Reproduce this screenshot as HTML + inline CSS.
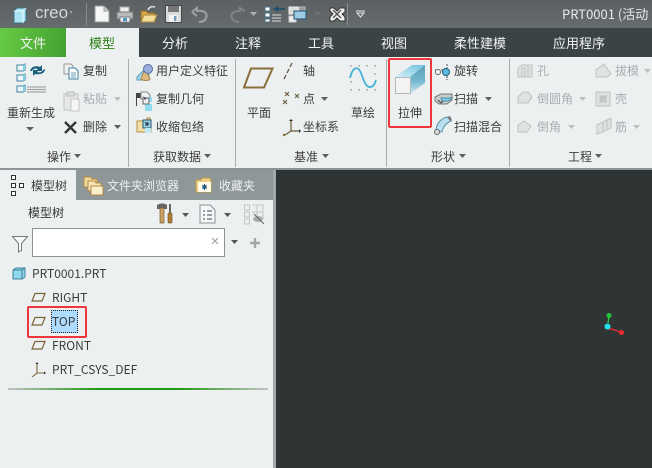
<!DOCTYPE html>
<html><head><meta charset="utf-8"><style>
html,body{margin:0;padding:0}
body{width:652px;height:468px;overflow:hidden;position:relative;background:#edf0f1;font-family:"Liberation Sans","Noto Sans CJK SC",sans-serif}
.b{position:absolute}
.t{position:absolute;line-height:16px;white-space:nowrap;font-size:12px;color:#3c3c3c;font-family:"Noto Sans CJK SC","Liberation Sans",sans-serif}
.g{color:#a9adae}
.w{color:#f2f4f4;font-size:13px}
svg{position:absolute;left:0;top:0}
</style></head><body>
<div class="b" style="left:0;top:0;width:652px;height:28px;background:linear-gradient(#5b6162,#666c6d)"></div>
<div class="b" style="left:0;top:28px;width:652px;height:29px;background:#3b4346"></div>
<div class="b" style="left:0;top:28px;width:66px;height:29px;background:linear-gradient(100deg,#66cc44,#44a030)"></div>
<div class="b" style="left:66px;top:28px;width:73px;height:29px;background:#edf0f1"></div>
<div class="b" style="left:0;top:168px;width:652px;height:2px;background:#8d9495"></div>
<div class="b" style="left:128px;top:59px;width:1px;height:108px;background:#a8adae"></div>
<div class="b" style="left:235px;top:59px;width:1px;height:108px;background:#a8adae"></div>
<div class="b" style="left:386px;top:59px;width:1px;height:108px;background:#a8adae"></div>
<div class="b" style="left:509px;top:59px;width:1px;height:108px;background:#a8adae"></div>
<!-- left panel -->
<div class="b" style="left:76px;top:170px;width:197px;height:30px;background:#8f9899"></div>
<div class="b" style="left:273px;top:170px;width:3px;height:298px;background:#a3a9aa"></div>
<div class="b" style="left:276px;top:170px;width:376px;height:298px;background:#2f3535"></div>
<div class="b" style="left:32px;top:228px;width:191px;height:27px;background:#fff;border:1px solid #8a9292"></div>
<div class="b" style="left:51px;top:310px;width:27px;height:23px;background:#aedcff;border:1px dotted #222;box-sizing:border-box"></div>
<div class="b" style="left:8px;top:388px;width:260px;height:2px;background:linear-gradient(90deg,#c0c4c2,#1f9a10 35%,#1f9a10 65%,#c0c4c2)"></div>
<div class="b" style="left:388px;top:58px;width:44px;height:70px;box-sizing:border-box;border:2px solid #f0363a;border-radius:2px"></div>
<div class="b" style="left:27px;top:306px;width:60px;height:32px;box-sizing:border-box;border:2px solid #f0363a;border-radius:2px"></div>

<svg width="652" height="468" viewBox="0 0 652 468" fill="none">
<defs>
<linearGradient id="top1" x1="0" y1="1" x2="1" y2="0"><stop offset="0" stop-color="#d4f0f7"/><stop offset="1" stop-color="#6fc3dd"/></linearGradient>
<linearGradient id="side1" x1="0" y1="0" x2="0" y2="1"><stop offset="0" stop-color="#5a9fb8"/><stop offset=".55" stop-color="#74b8d0"/><stop offset="1" stop-color="#cdeef6"/></linearGradient>
</defs>
<!-- creo cube -->
<path d="M14 11l3-3h9v13l-3 2H14z" fill="#a8e4f4" stroke="#3f6f80"/><path d="M14 11h9v12M23 11l3-3" stroke="#e8fafd"/>
<line x1="86.500" y1="3" x2="86.500" y2="26" stroke="#878c8d"/>
<line x1="347.500" y1="3" x2="347.500" y2="26" stroke="#878c8d"/>
<!-- QAT -->
<path d="M95 6h9l5 5v11H95z" fill="#f5f6f6" stroke="#999"/><path d="M104 6v5h5" fill="#ccc" stroke="#999"/>
<path d="M120 7h9v5h-9z" fill="#eee" stroke="#aaa"/><rect x="117" y="12" width="16" height="7" rx="1" fill="#bbb" stroke="#777"/><rect x="120" y="17" width="10" height="5" fill="#f2f2f2" stroke="#778"/><rect x="123" y="18" width="4" height="3" fill="#4a90b8"/>
<path d="M141 11h5l2 2h7v9h-14z" fill="#d9a545" stroke="#8a6a30"/><path d="M141 22l3-7h13l-3 7z" fill="#f4dc9a" stroke="#a78a48"/><path d="M148 10c1-3 4-4 7-3" stroke="#ddd" stroke-width="1.500"/>
<rect x="165.500" y="5.500" width="16" height="17" fill="#d8dcdc" stroke="#444"/><rect x="168" y="6" width="11" height="6" fill="#777"/><rect x="169" y="15" width="9" height="7" fill="#f4f4f4"/><rect x="174" y="16" width="2.500" height="5" fill="#6a9dbb"/>
<path d="M192 12l5-4v3c7-1 11 2 9 7-1 3-4 4-7 4" stroke="#9ea2a3" stroke-width="2"/><path d="M192 12l5 4" stroke="#9ea2a3" stroke-width="2"/>
<path d="M212 14l3 1-3 0z" fill="#6f7576"/>
<path d="M245 11l-5-3v3c-7 0-10 3-8 7 1 3 4 4 7 4" stroke="#7f8485" stroke-width="2"/>
<path d="M250 12h7l-3.500 4z" fill="#aab0b0"/>
<rect x="265" y="7" width="5" height="4" fill="#fff" stroke="#4a6f86"/><rect x="265" y="13" width="5" height="4" fill="#fff" stroke="#4a6f86"/><rect x="265" y="19" width="5" height="3" fill="#fff" stroke="#4a6f86"/>
<path d="M272 15h9M272 18h9M272 21h9" stroke="#ddd"/><path d="M273 9h6M276 7l3 2-3 2M285 9h-5" stroke="#1a4d6b" stroke-width="1.500"/>
<rect x="289" y="7" width="9" height="7" fill="#ddd" stroke="#eee"/><rect x="289" y="16" width="7" height="6" fill="#eee" stroke="#ccc"/><rect x="299" y="7" width="6" height="5" fill="#999" stroke="#bbb"/><rect x="294" y="11" width="12" height="8" fill="#9ccbe6" stroke="#1f4f70"/>
<path d="M314 12h7l-3.500 4z" fill="#6f7576"/>
<path d="M330 8h4l3 3 3-3h5v4l-3 2 3 3v4h-5l-3-3-3 3h-4v-4l3-3-3-3z" fill="#f5f5f5" stroke="#333"/><path d="M333 10l8 8M341 10l-8 8" stroke="#555" stroke-width="1.500"/>
<path d="M356 11h9M357 13l3.500 4 3.500-4z" stroke="#e4e6e6" fill="none"/>
<!-- regen -->
<g fill="#eaf8fb" stroke="#3f7f99"><path d="M17 65h6l2-1v6l-2 1h-6z"/><path d="M17 75h6l2-1v6l-2 1h-6z"/><path d="M17 86h6l2-1v6l-2 1h-6z"/></g>
<g fill="#7fd0ea"><path d="M23 65l2-1v6l-2 1z"/><path d="M23 75l2-1v6l-2 1z"/><path d="M23 86l2-1v6l-2 1z"/></g>
<path d="M27 87h19M27 89.500h19M27 92h19" stroke="#a4a8a9" stroke-width="1.200"/>
<path d="M30 71c1-4 5-6 10-4l2-2v6h-6l2-2c-3-1-5 0-6 2z M45 69c0 4-4 6-10 5l-2 2v-6h6l-2 2c3 1 5 0 6-2z" fill="#1b5f7f"/>
<!-- copy -->
<path d="M64 64h7l2 2v8h-9z" fill="#eee" stroke="#999"/><path d="M69 68h6l3 3v8H69z" fill="#fff" stroke="#3d7f9f"/><path d="M71 73h5M71 75h5M71 77h5" stroke="#3d7f9f" stroke-width=".7"/>
<path d="M64 94h14v16H64z" fill="#e6e8e8" stroke="#c0c2c2"/><rect x="67" y="92" width="7" height="4" fill="#ddd" stroke="#bbb"/><path d="M71 99h8v12h-8z" fill="#f6f6f6" stroke="#c4c6c6"/>
<path d="M65 122l11 11M76 122l-11 11" stroke="#333" stroke-width="2.400"/>
<!-- right group 2 -->
<path d="M137 77l6-6h6v9h-12z" fill="#9fd8ec" stroke="#5a9ab4"/>
<path d="M145 68l-4 11c2 2 8 2 9 0z" fill="#e0bb80" stroke="#a68550"/><circle cx="148" cy="69" r="4.500" fill="#9aaedd" stroke="#5a6da3"/>
<path d="M137 93h6v5h-6v8h-1v-13z" fill="#444"/><path d="M141 92h6l3 3v4h-9z" fill="#f2f2f2" stroke="#888"/><path d="M145 97h7v5h-7zM145 104h7v7h-7z" fill="#8fdcf0"/><path d="M143 98h6v6h-6z" fill="#eee" stroke="#666"/><path d="M143 96l3 3-1 1z" fill="#111"/>
<path d="M137 121h10v-3h3v3h1v11h-14z" fill="#f4dfa8" stroke="#b58f3e"/><path d="M143 120h8v8h-8z" fill="#9ed6ea" stroke="#24556f"/><path d="M145 122l3 3M148 122v3h-3" stroke="#123" /><path d="M145 128h6v5h-6z" fill="#bbe9f5"/>
<!-- plane -->
<path d="M251 68.500h21.500l-8.500 19h-20z" stroke="#8b6f3a" stroke-width="2"/>
<path d="M292 63l-2 4M289 69l-2 4M286 75l-2 4" stroke="#5f5540" stroke-width="1.300"/>
<g stroke="#6b6045" stroke-width="1.200"><path d="M285 92l4 4M289 92l-4 4M295 94l4 4M299 94l-4 4M283 100l4 4M287 100l-4 4"/></g>
<path d="M291 120v11h9M291 131l-6 4" stroke="#6a5a35" stroke-width="1.200"/><path d="M289 121l2-2 2 2z" fill="#333"/><path d="M299 129l2 2-2 2z" fill="#333"/><circle cx="284" cy="135" r="1.200" fill="#8b6f3a"/>
<!-- sketch -->
<g fill="#777"><circle cx="351" cy="66" r=".7"/><circle cx="359" cy="66" r=".7"/><circle cx="367" cy="66" r=".7"/><circle cx="375" cy="66" r=".7"/><circle cx="351" cy="74" r=".7"/><circle cx="375" cy="74" r=".7"/><circle cx="351" cy="82" r=".7"/><circle cx="375" cy="82" r=".7"/><circle cx="351" cy="90" r=".7"/><circle cx="359" cy="90" r=".7"/><circle cx="367" cy="90" r=".7"/><circle cx="375" cy="90" r=".7"/></g>
<path d="M350 78c3-12 8-12 11-5 3 8 5 15 10 14 3-1 4-4 5-7" stroke="#45b3d9" stroke-width="1.800"/>
<!-- extrude -->
<path d="M395 77l17-12h13l-15 12z" fill="url(#top1)"/><path d="M410 77l15-12v18l-15 11z" fill="url(#side1)"/>
<rect x="395.500" y="77.500" width="15" height="16" fill="#f3f3f3" stroke="#b5b8b8"/>
<path d="M435 70h8M447 64v16" stroke="#555" stroke-dasharray="2 1"/><circle cx="438" cy="72" r="2.500" fill="#fff" stroke="#666"/><ellipse cx="446" cy="72" rx="3.500" ry="3.500" fill="#5ebbe0" stroke="#1d5d80"/>
<path d="M435 97l6-3h11v6l-5 4h-8l-4-3z" fill="#c8cccc" stroke="#777"/><path d="M441 98h11l-4 3h-6z" fill="#7fd0ea" stroke="#4a8aa4"/><path d="M438 100l3 3 2-2" stroke="#444"/>
<path d="M436 131c0-8 6-13 11-14l4 4c-5 2-8 6-9 11z" fill="#b8dff0" stroke="#5f92a8"/><circle cx="437" cy="132" r="2.500" fill="#ddd" stroke="#666"/><path d="M447 117l3-1 2 4-1 1z" fill="#777"/>
<!-- eng disabled -->
<g stroke="#bfc3c3" fill="#dfe2e2">
<path d="M518 68l4-3h10v12h-14z"/><path d="M522 77v-7c0-3 3-3 3 0v7M528 66v10" fill="none"/>
<path d="M518 97l5-5h5l4 5-4 6h-10z"/><path d="M518 125l6-4 7 5-4 6h-9z"/>
<path d="M596 70l8-6 7 10-4 3h-11z"/><rect x="596" y="92" width="14" height="14"/><rect x="600" y="96" width="6" height="6" fill="#c4c8c8"/>
<path d="M597 125l6-3 8-4v10l-8 4-6 2z"/><path d="M603 122v9M607 120v9" fill="none"/></g>
<!-- carets -->
<g fill="#5c6060"><path d="M26 127h8l-4 4z"/><path d="M114 125h7l-3.500 4z"/><path d="M74 154h7l-3.500 4z"/><path d="M204 154h7l-3.500 4z"/><path d="M322 154h7l-3.500 4z"/><path d="M459 154h7l-3.500 4z"/><path d="M595 154h7l-3.500 4z"/><path d="M321 97h7l-3.500 4z"/><path d="M485 97h7l-3.500 4z"/></g>
<g fill="#bcc0c0"><path d="M114 97h7l-3.500 4z"/><path d="M579 97h7l-3.500 4z"/><path d="M568 125h7l-3.500 4z"/><path d="M644 69h7l-3.500 4z"/><path d="M633 125h7l-3.500 4z"/></g>
<!-- tab icons -->
<g stroke="#333" fill="#fff"><rect x="11.500" y="175.500" width="4" height="4"/><rect x="11.500" y="183.500" width="4" height="4"/><rect x="19.500" y="183.500" width="4" height="4"/><rect x="11.500" y="191.500" width="4" height="4"/></g>
<g stroke="#b28c45"><path d="M84 177h7l1 2h5v8H84z" fill="#f0d79a"/><path d="M88 181h7l1 2h5v8H88z" fill="#f6e4b4"/><path d="M91 186h12v9H91z" fill="#fbeecb"/></g>
<path d="M196 180h5l1-2h8l1 2v12h-15z" fill="#f0d086" stroke="#c09a4d"/><rect x="198" y="182" width="13" height="10" fill="#fffbe8"/><path d="M204.500 184v6M202 187h5M202.500 185l4 4M206.500 185l-4 4" stroke="#1b5a85"/>
<!-- tree toolbar -->
<path d="M157 205c3-2 8-2 10 0v4h-10z" fill="#666"/><rect x="160" y="208" width="4" height="15" fill="#c9a268" stroke="#7a5a2c" stroke-width=".7"/><rect x="169" y="204" width="2" height="9" fill="#666"/><rect x="168" y="213" width="4" height="10" rx="1" fill="#b08030" stroke="#7a5a2c" stroke-width=".7"/>
<path d="M182 213h7l-3.500 4zM224 213h7l-3.500 4z" fill="#555"/>
<path d="M200 205h10l5 5v13h-15z" fill="#f5f6f6" stroke="#8a9092"/><path d="M203 211h2M207 211h5M203 215h2M207 215h5M203 219h2M207 219h5" stroke="#445"/>
<g stroke="#c2c6c6" fill="none"><rect x="244.500" y="205" width="5" height="5"/><rect x="244.500" y="212" width="5" height="5"/><rect x="244.500" y="219" width="5" height="5"/><path d="M252 205h11v14M252 212h11M257 205v12"/></g>
<ellipse cx="258" cy="219" rx="5" ry="3" fill="#a8acac"/><path d="M254 214l10 10" stroke="#666"/>
<!-- filter -->
<path d="M12.500 236.500h15l-6 7v7l-3 1.500v-8.500z" fill="#f8f9f9" stroke="#777"/>
<path d="M212 238l6 6M218 238l-6 6" stroke="#a0a4a4" stroke-width="1.200"/>
<path d="M231 240h7l-3.500 4z" fill="#555"/>
<path d="M255 238v10M250 243h10" stroke="#a0a5a5" stroke-width="2.400"/>
<!-- part icon -->
<path d="M13 270l3-2h9v9l-3 2H13z" fill="#8fd8ee" stroke="#3f7f99"/><path d="M13 270h9v9M22 270l3-2" stroke="#3f7f99" fill="none"/>
<!-- plane tree icons -->
<g stroke="#7d6337" stroke-width="1.200"><path d="M35 293.500h10l-3 7.500H32z"/><path d="M35 317.500h10l-3 7.500H32z"/><path d="M35 341.500h10l-3 7.500H32z"/></g>
<path d="M37 363v10h8M37 373l-5 4" stroke="#7d6337" stroke-width="1.100"/><path d="M35.500 364l1.500-2 1.500 2z" fill="#333"/><path d="M44 371.500l2 1.500-2 1.500z" fill="#333"/>
<!-- csys in viewport -->
<path d="M608 323l1-7" stroke="#28d040" stroke-width="1.300"/><path d="M608 329h4l8 3" stroke="#ee2a2a" stroke-width="1.300"/>
<circle cx="609" cy="315.500" r="2.500" fill="#1fc838"/><circle cx="621.500" cy="332.500" r="2.500" fill="#ee2a2a"/><circle cx="607.500" cy="326.500" r="3" fill="#28e0f0"/>
</svg>

<span class="t" style="left:35px;top:5px;font-size:17px;color:#d4d8d8;font-family:'Liberation Sans',sans-serif">creo</span>
<span class="t" style="left:70px;top:6px;font-size:5px;color:#ddd">®</span>
<span class="t" style="left:562px;top:6px;color:#e8eaea;font-size:13px">PRT0001 (活动</span>

<span class="t w" style="left:20px;top:35px">文件</span>
<span class="t w" style="left:89px;top:35px;color:#2d7f15">模型</span>
<span class="t w" style="left:162px;top:35px">分析</span>
<span class="t w" style="left:235px;top:35px">注释</span>
<span class="t w" style="left:308px;top:35px">工具</span>
<span class="t w" style="left:381px;top:35px">视图</span>
<span class="t w" style="left:454px;top:35px">柔性建模</span>
<span class="t w" style="left:553px;top:35px">应用程序</span>

<span class="t" style="left:83px;top:63px">复制</span>
<span class="t g" style="left:83px;top:91px">粘贴</span>
<span class="t" style="left:83px;top:119px">删除</span>
<span class="t" style="left:7px;top:105px">重新生成</span>
<span class="t" style="left:47px;top:149px">操作</span>
<span class="t" style="left:156px;top:63px">用户定义特征</span>
<span class="t" style="left:156px;top:91px">复制几何</span>
<span class="t" style="left:156px;top:119px">收缩包络</span>
<span class="t" style="left:153px;top:149px">获取数据</span>
<span class="t" style="left:247px;top:105px">平面</span>
<span class="t" style="left:303px;top:63px">轴</span>
<span class="t" style="left:303px;top:91px">点</span>
<span class="t" style="left:303px;top:119px">坐标系</span>
<span class="t" style="left:294px;top:149px">基准</span>
<span class="t" style="left:351px;top:105px">草绘</span>
<span class="t" style="left:398px;top:105px">拉伸</span>
<span class="t" style="left:454px;top:63px">旋转</span>
<span class="t" style="left:454px;top:91px">扫描</span>
<span class="t" style="left:454px;top:119px">扫描混合</span>
<span class="t" style="left:431px;top:149px">形状</span>
<span class="t g" style="left:537px;top:63px">孔</span>
<span class="t g" style="left:537px;top:91px">倒圆角</span>
<span class="t g" style="left:537px;top:119px">倒角</span>
<span class="t g" style="left:615px;top:63px">拔模</span>
<span class="t g" style="left:615px;top:91px">壳</span>
<span class="t g" style="left:615px;top:119px">筋</span>
<span class="t" style="left:568px;top:149px">工程</span>

<span class="t" style="left:31px;top:178px">模型树</span>
<span class="t" style="left:107px;top:178px;color:#eef0f0">文件夹浏览器</span>
<span class="t" style="left:219px;top:178px;color:#eef0f0">收藏夹</span>
<span class="t" style="left:28px;top:205px;color:#333">模型树</span>
<span class="t" style="left:32px;top:266px">PRT0001.PRT</span>
<span class="t" style="left:52px;top:290px">RIGHT</span>
<span class="t" style="left:52px;top:314px">TOP</span>
<span class="t" style="left:52px;top:338px">FRONT</span>
<span class="t" style="left:52px;top:362px">PRT_CSYS_DEF</span>
</body></html>
